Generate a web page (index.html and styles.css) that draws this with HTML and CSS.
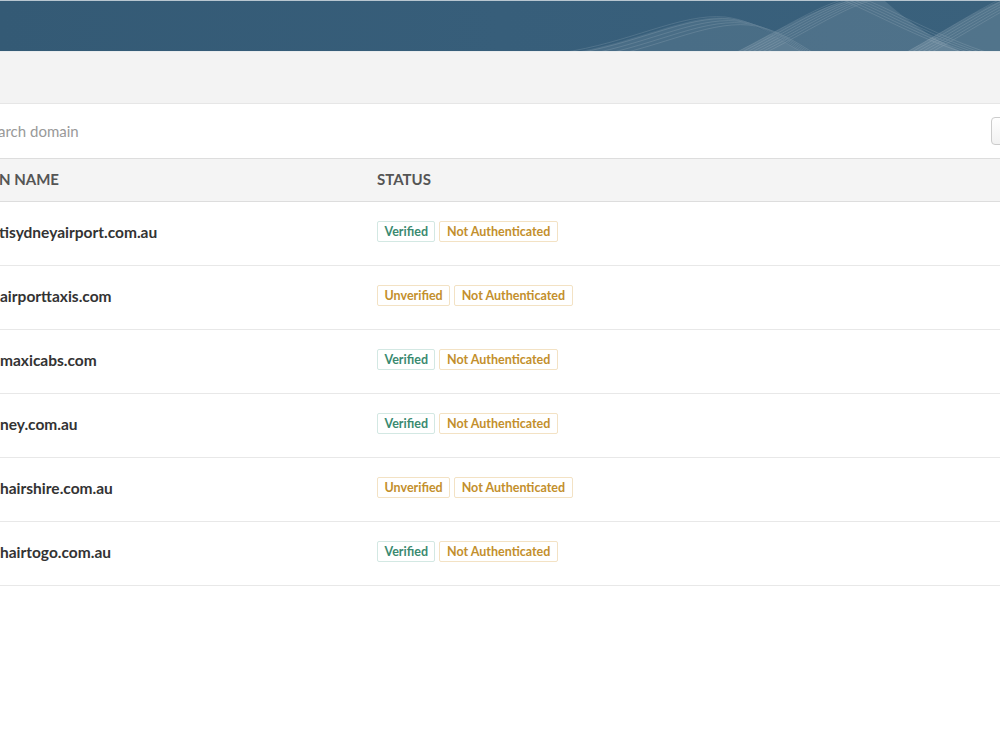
FILE: index.html
```html
<!DOCTYPE html>
<html>
<head>
<meta charset="utf-8">
<link rel="stylesheet" href="styles.css">
</head>
<body>
<div class="page">
  <div class="topline"></div>
  <header class="banner">
    <svg class="waves" width="1000" height="50" viewBox="0 0 1000 50" preserveAspectRatio="none">
      <defs>
        <path id="w1" d="M560,52 C630,42 680,12 725,16 C760,20 785,44 805,52" fill="none" stroke="#ffffff" stroke-width="0.6"/>
        <path id="w2" d="M735,52 C775,32 815,6 845,-2" fill="none" stroke="#ffffff" stroke-width="0.6"/>
        <path id="w3" d="M840,-2 C870,10 920,38 965,52" fill="none" stroke="#ffffff" stroke-width="0.6"/>
        <path id="w4" d="M905,52 C945,30 975,10 1005,-4" fill="none" stroke="#ffffff" stroke-width="0.6"/>
      </defs>
      <path d="M570,52 C640,40 690,12 728,17 C760,22 785,44 805,52 Z" fill="#ffffff" opacity="0.09"/>
      <path d="M735,52 C775,32 815,6 848,0 L885,0 C905,18 935,40 965,52 Z" fill="#ffffff" opacity="0.11"/>
      <path d="M905,52 C945,30 975,10 1000,0 L1000,52 Z" fill="#ffffff" opacity="0.12"/>
      <g opacity="0.2">
        <use href="#w1"/><use href="#w1" transform="translate(6,2)"/><use href="#w1" transform="translate(12,4)"/><use href="#w1" transform="translate(18,6)"/><use href="#w1" transform="translate(24,8)"/>
        <use href="#w2"/><use href="#w2" transform="translate(5,0)"/><use href="#w2" transform="translate(10,0)"/><use href="#w2" transform="translate(15,0)"/><use href="#w2" transform="translate(20,0)"/><use href="#w2" transform="translate(25,0)"/><use href="#w2" transform="translate(30,0)"/>
        <use href="#w3"/><use href="#w3" transform="translate(6,0)"/><use href="#w3" transform="translate(12,0)"/><use href="#w3" transform="translate(18,0)"/><use href="#w3" transform="translate(24,0)"/>
        <use href="#w4"/><use href="#w4" transform="translate(5,0)"/><use href="#w4" transform="translate(10,0)"/><use href="#w4" transform="translate(15,0)"/><use href="#w4" transform="translate(20,0)"/><use href="#w4" transform="translate(25,0)"/>
      </g>
    </svg>
  </header>
  <div class="subbar"></div>
  <div class="searchbar">
    <input class="search" type="text" placeholder="arch domain">
    <button class="btn"></button>
  </div>
  <div class="table">
    <div class="thead">
      <div class="c-domain">N NAME</div>
      <div class="c-status">STATUS</div>
    </div>
    <div class="row">
      <div class="c-domain d1">tisydneyairport.com.au</div>
      <div class="c-status"><span class="badge ok">Verified</span><span class="badge warn">Not Authenticated</span></div>
    </div>
    <div class="row">
      <div class="c-domain">airporttaxis.com</div>
      <div class="c-status"><span class="badge warn">Unverified</span><span class="badge warn">Not Authenticated</span></div>
    </div>
    <div class="row">
      <div class="c-domain">maxicabs.com</div>
      <div class="c-status"><span class="badge ok">Verified</span><span class="badge warn">Not Authenticated</span></div>
    </div>
    <div class="row">
      <div class="c-domain">ney.com.au</div>
      <div class="c-status"><span class="badge ok">Verified</span><span class="badge warn">Not Authenticated</span></div>
    </div>
    <div class="row">
      <div class="c-domain">hairshire.com.au</div>
      <div class="c-status"><span class="badge warn">Unverified</span><span class="badge warn">Not Authenticated</span></div>
    </div>
    <div class="row">
      <div class="c-domain">hairtogo.com.au</div>
      <div class="c-status"><span class="badge ok">Verified</span><span class="badge warn">Not Authenticated</span></div>
    </div>
  </div>
</div>
</body>
</html>
```
FILE: styles.css
```css
html, body {
  margin: 0;
  padding: 0;
  background: #ffffff;
  overflow: hidden;
}
body {
  font-family: Lato, "Open Sans", sans-serif;
  width: 1000px;
  height: 750px;
}
.page {
  width: 1000px;
  overflow: hidden;
}
.topline {
  height: 1px;
  background: #b8c6d0;
}
.banner {
  height: 50px;
  background: linear-gradient(90deg, #345a75 0%, #375e7a 50%, #3a617c 100%);
  overflow: hidden;
}
.waves {
  display: block;
}
.subbar {
  height: 51px;
  background: #f3f3f3;
  border-top: 1px solid #e9ecee;
  border-bottom: 1px solid #e6e6e6;
}
.searchbar {
  height: 54px;
  display: flex;
  align-items: center;
  justify-content: space-between;
  background: #ffffff;
}
.search {
  border: none;
  outline: none;
  font-family: Lato, sans-serif;
  font-size: 15px;
  padding: 0;
  margin-left: -2px;
  width: 300px;
  color: #333;
  background: transparent;
}
.search::placeholder {
  color: #999999;
}
.btn {
  width: 40px;
  height: 28px;
  margin-right: -31px;
  border: 1px solid #cccccc;
  border-radius: 4px;
  background: linear-gradient(#ffffff, #f2f2f2);
  padding: 0;
}
.table {
  border-top: 1px solid #dddddd;
}
.thead {
  box-sizing: border-box;
  display: flex;
  align-items: center;
  height: 43px;
  padding-bottom: 2px;
  background: #f4f4f4;
  border-bottom: 1px solid #dddddd;
  font-weight: 700;
  font-size: 15px;
  color: #555555;
}
.thead .c-domain {
  margin-left: -1px;
  width: 378px;
}
.row {
  box-sizing: border-box;
  display: flex;
  align-items: center;
  height: 64px;
  padding-bottom: 4px;
  border-bottom: 1px solid #e8e8e8;
  font-size: 15.5px;
  font-weight: 700;
  color: #333333;
}
.c-domain {
  width: 377px;
  flex: none;
  white-space: nowrap;
}
.d1 {
  margin-left: -1px;
  width: 378px;
}
.c-status {
  display: flex;
  gap: 4px;
}
.badge {
  font-size: 12.5px;
  font-weight: 700;
  padding: 2px 6.5px;
  line-height: 15px;
  border-radius: 2px;
  background: #ffffff;
}
.badge.ok {
  color: #3a8a70;
  border: 1px solid #d3e8e3;
}
.badge.warn {
  color: #c38f2c;
  border: 1px solid #f3e2c4;
}
```
